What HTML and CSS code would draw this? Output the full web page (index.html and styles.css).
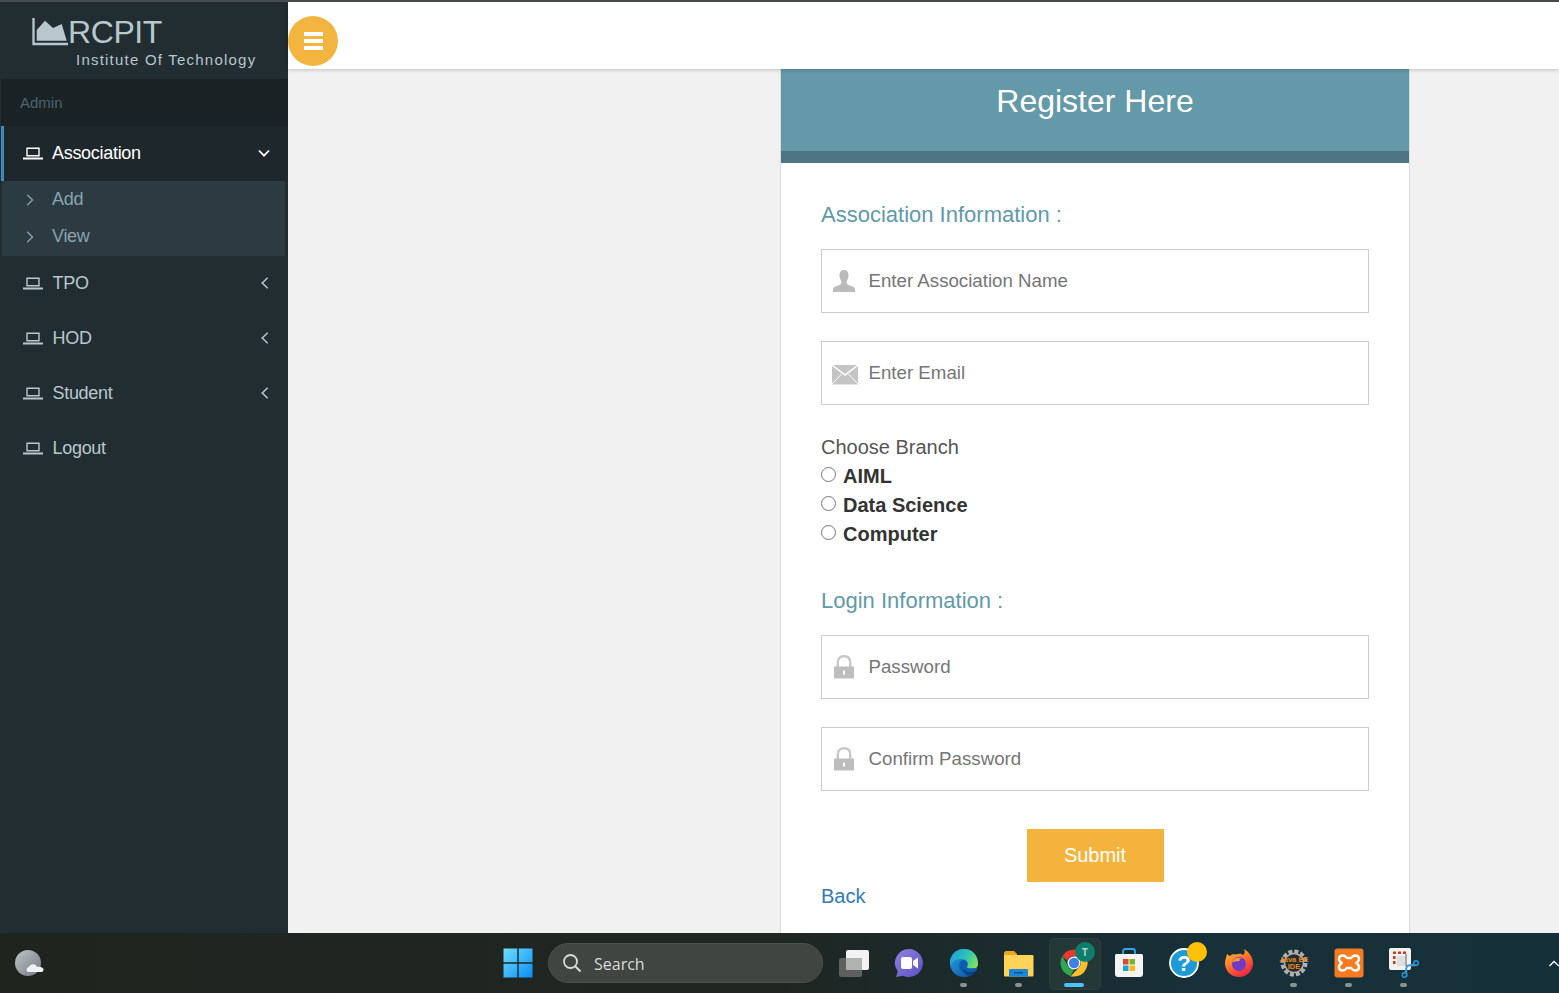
FILE: index.html
```html
<!DOCTYPE html>
<html lang="en">
<head>
<meta charset="utf-8">
<title>Register Here</title>
<link rel="stylesheet" href="styles.css">
</head>
<body>
<div class="topline"></div>
<div class="app">
  <aside class="sidebar">
    <div class="logo">
      <div class="logo-top">
        <svg class="logo-icon" width="36" height="28" viewBox="0 0 36 28"><path d="M1.500 0V26H36" fill="none" stroke="#b8c7ce" stroke-width="2.300"/><path d="M4.700 22.700V12L13 2.700L21 10L29.700 6L34.700 22.700Z" fill="#b8c7ce"/></svg>
        <span class="logo-name">RCPIT</span>
      </div>
      <div class="logo-sub">Institute Of Technology</div>
    </div>
    <div class="role">Admin</div>
    <nav>
      <a class="item active">
        <svg class="laptop" width="22" height="14" viewBox="0 0 22 14"><path d="M5 1.200H17V8.700H5Z" fill="none" stroke="currentColor" stroke-width="1.400"/><path d="M1 11.500H21" stroke="currentColor" stroke-width="2"/></svg>
        <span class="label">Association</span>
        <svg class="chev" width="12" height="12" viewBox="0 0 12 12"><path d="M1 3.500L6 8.700L11 3.500" fill="none" stroke="currentColor" stroke-width="1.800"/></svg>
      </a>
      <div class="sub">
        <a class="sub-item"><svg width="8" height="12" viewBox="0 0 8 12"><path d="M1.200 0.800L6.500 6L1.200 11.200" fill="none" stroke="currentColor" stroke-width="1.300"/></svg><span>Add</span></a>
        <a class="sub-item"><svg width="8" height="12" viewBox="0 0 8 12"><path d="M1.200 0.800L6.500 6L1.200 11.200" fill="none" stroke="currentColor" stroke-width="1.300"/></svg><span>View</span></a>
      </div>
      <a class="item">
        <svg class="laptop" width="22" height="14" viewBox="0 0 22 14"><path d="M5 1.200H17V8.700H5Z" fill="none" stroke="currentColor" stroke-width="1.400"/><path d="M1 11.500H21" stroke="currentColor" stroke-width="2"/></svg>
        <span class="label">TPO</span>
        <svg class="chev" width="12" height="12" viewBox="0 0 12 12"><path d="M8.700 0.800L3.200 6L8.700 11.200" fill="none" stroke="currentColor" stroke-width="1.500"/></svg>
      </a>
      <a class="item">
        <svg class="laptop" width="22" height="14" viewBox="0 0 22 14"><path d="M5 1.200H17V8.700H5Z" fill="none" stroke="currentColor" stroke-width="1.400"/><path d="M1 11.500H21" stroke="currentColor" stroke-width="2"/></svg>
        <span class="label">HOD</span>
        <svg class="chev" width="12" height="12" viewBox="0 0 12 12"><path d="M8.700 0.800L3.200 6L8.700 11.200" fill="none" stroke="currentColor" stroke-width="1.500"/></svg>
      </a>
      <a class="item">
        <svg class="laptop" width="22" height="14" viewBox="0 0 22 14"><path d="M5 1.200H17V8.700H5Z" fill="none" stroke="currentColor" stroke-width="1.400"/><path d="M1 11.500H21" stroke="currentColor" stroke-width="2"/></svg>
        <span class="label">Student</span>
        <svg class="chev" width="12" height="12" viewBox="0 0 12 12"><path d="M8.700 0.800L3.200 6L8.700 11.200" fill="none" stroke="currentColor" stroke-width="1.500"/></svg>
      </a>
      <a class="item">
        <svg class="laptop" width="22" height="14" viewBox="0 0 22 14"><path d="M5 1.200H17V8.700H5Z" fill="none" stroke="currentColor" stroke-width="1.400"/><path d="M1 11.500H21" stroke="currentColor" stroke-width="2"/></svg>
        <span class="label">Logout</span>
      </a>
    </nav>
  </aside>
  <div class="main">
    <header class="topbar">
      <button class="toggle" type="button" aria-label="Menu"><span></span><span></span><span></span></button>
    </header>
    <div class="content">
      <section class="card">
        <div class="card-head"><h1>Register Here</h1></div>
        <form class="card-body">
          <h2>Association Information :</h2>
          <label class="field">
            <svg width="24" height="24" viewBox="0 0 24 24"><path d="M12 1C8.500 1 7.500 3.500 7.500 6.500C7.500 9.500 9 11.500 9.500 13C9.500 15 8 16 5 17C2.500 17.800 1 18.500 1 20V23H23V20C23 18.500 21.500 17.800 19 17C16 16 14.500 15 14.500 13C15 11.500 16.500 9.500 16.500 6.500C16.500 3.500 15.500 1 12 1Z" fill="#bbb"/></svg>
            <input type="text" placeholder="Enter Association Name">
          </label>
          <label class="field">
            <svg class="mail" width="26" height="20" viewBox="0 0 26 20"><path d="M0 1L13 11L26 1V19.500H0Z" fill="#c4c4c4"/><path d="M1 0H25L13 9Z" fill="#c4c4c4"/><path d="M0 19L9.500 9M26 19L16.500 9" stroke="#fff" stroke-width="1" fill="none"/></svg>
            <input type="email" placeholder="Enter Email">
          </label>
          <div class="branch-title">Choose Branch</div>
          <label class="radio"><input type="radio" name="branch"><b>AIML</b></label>
          <label class="radio"><input type="radio" name="branch"><b>Data Science</b></label>
          <label class="radio"><input type="radio" name="branch"><b>Computer</b></label>
          <h2 class="login-title">Login Information :</h2>
          <label class="field">
            <svg width="24" height="24" viewBox="0 0 24 24"><path d="M5.800 12V7.500C5.800 3.500 8 1.300 12 1.300C16 1.300 18.200 3.500 18.200 7.500V12" fill="none" stroke="#c8c8c8" stroke-width="2.400"/><path d="M2 11.500H22V23.500H2Z" fill="#bdbdbd"/><path d="M11 15.500H13V19.500H11Z" fill="#fff"/></svg>
            <input type="password" placeholder="Password">
          </label>
          <label class="field">
            <svg width="24" height="24" viewBox="0 0 24 24"><path d="M5.800 12V7.500C5.800 3.500 8 1.300 12 1.300C16 1.300 18.200 3.500 18.200 7.500V12" fill="none" stroke="#c8c8c8" stroke-width="2.400"/><path d="M2 11.500H22V23.500H2Z" fill="#bdbdbd"/><path d="M11 15.500H13V19.500H11Z" fill="#fff"/></svg>
            <input type="password" placeholder="Confirm Password">
          </label>
          <div class="actions"><button class="submit" type="button">Submit</button></div>
          <a class="back">Back</a>
        </form>
      </section>
    </div>
  </div>
</div>
<footer class="taskbar">
  <svg class="weather" width="30" height="28" viewBox="0 0 30 28">
    <defs><linearGradient id="moon" x1="0" y1="0" x2="1" y2="1"><stop offset="0" stop-color="#c0c6ca"/><stop offset="1" stop-color="#6f7a82"/></linearGradient></defs>
    <circle cx="13" cy="14" r="13" fill="url(#moon)"/>
    <path d="M13 23C11 23 11 18 14 18C15 14.500 21 14 22 18C25 17 29 19 28.500 21C28 23 27 23 26 23Z" fill="#f0f1f2"/>
  </svg>
  <div class="tasks">
    <div class="tb">
      <svg width="30" height="30" viewBox="0 0 30 30"><defs><linearGradient id="win" x1="0" y1="0" x2="1" y2="1"><stop offset="0" stop-color="#6fe0ff"/><stop offset="1" stop-color="#0a8cf5"/></linearGradient></defs><path d="M0.500 0.500H14.300V14.300H0.500ZM15.700 0.500H29.500V14.300H15.700ZM0.500 15.700H14.300V29.500H0.500ZM15.700 15.700H29.500V29.500H15.700Z" fill="url(#win)"/></svg>
    </div>
    <div class="search">
      <svg width="20" height="20" viewBox="0 0 20 20"><circle cx="8.500" cy="8.500" r="6.500" fill="none" stroke="#d8dbd8" stroke-width="1.800"/><path d="M13.500 13.500L18.500 18.500" stroke="#d8dbd8" stroke-width="2"/></svg>
      <span>Search</span>
    </div>
    <div class="tb">
      <svg width="32" height="28" viewBox="0 0 32 28"><rect x="1" y="9" width="23" height="19" rx="2" fill="#5d605e"/><rect x="8" y="1" width="23" height="20" rx="2" fill="#f2f2f2"/><rect x="8" y="9" width="16" height="12" fill="#b0b2b0"/></svg>
    </div>
    <div class="tb">
      <svg width="30" height="30" viewBox="0 0 30 30"><defs><linearGradient id="meet" x1="0" y1="0" x2="1" y2="1"><stop offset="0" stop-color="#8f83e6"/><stop offset="1" stop-color="#5a50c0"/></linearGradient></defs><path d="M15 1A14 14 0 1 1 9 27.700L2 29C3 26 3.500 24.500 3.800 23.400A14 14 0 0 1 15 1Z" fill="url(#meet)"/><rect x="7" y="9" width="11" height="12" rx="2" fill="#fff"/><path d="M19 13L24 9.500V20.500L19 17Z" fill="#fff"/></svg>
    </div>
    <div class="tb dot">
      <svg width="30" height="30" viewBox="0 0 30 30"><defs><linearGradient id="edge1" x1="0" y1="0.300" x2="1" y2="0.700"><stop offset="0" stop-color="#1f9fe0"/><stop offset="0.550" stop-color="#2fc6b0"/><stop offset="1" stop-color="#86e05a"/></linearGradient><linearGradient id="edge2" x1="0" y1="0" x2="1" y2="1"><stop offset="0" stop-color="#2aa8e6"/><stop offset="1" stop-color="#0a4a96"/></linearGradient></defs><circle cx="15" cy="15" r="14" fill="url(#edge2)"/><path d="M1 15C1 7 7 1 15 1C23 1 29 7 29 16C29 19 27 20.500 24 20.500C20 20.500 18 20 17.500 19C20 17 19 13 15 11.500C10 10 4 12 1 17Z" fill="url(#edge1)"/><path d="M10.500 15.500C11 13 14 11.500 16 12.300C18.500 13.500 19.500 17 17.500 19C19 21 24 21 28.500 19.500C27 24 23 27.500 21 27.700C14 28 9 21 10.500 15.500Z" fill="#0b5fae"/><path d="M13 21C15 25 18 27.500 21 27.700C23 27.500 26 25.500 27.500 22.500C24 24.500 18 25 13 21Z" fill="#0a3f80"/></svg>
    </div>
    <div class="tb dot">
      <svg width="31" height="27" viewBox="0 0 31 27"><path d="M1 3C1 2 2 1 3 1H11L14 4H14V8H1Z" fill="#e8a91c"/><path d="M1 5H29C30 5 30.500 5.500 30.500 6.500V25C30.500 26 30 26.500 29 26.500H2C1.500 26.500 1 26 1 25Z" fill="#ffd357"/><path d="M6 20.500C6 19.500 6.500 19 7.500 19H23.500C24.500 19 25 19.500 25 20.500V26.500H6Z" fill="#1c87d8"/><path d="M11 22H20V23.500H11Z" fill="#0c4f94"/></svg>
    </div>
    <div class="tb active-app">
      <svg class="chrome" width="28" height="28" viewBox="0 0 28 28"><path d="M14 0.500A13.500 13.500 0 0 1 25.700 7.250H14A6.750 6.750 0 0 0 7.600 11.900L2.300 7.250A13.500 13.500 0 0 1 14 0.500Z" fill="#e33b2e"/><path d="M2.300 7.250L8.200 17.500A6.750 6.750 0 0 0 14 20.750L10.500 27A13.500 13.500 0 0 1 2.300 7.250Z" fill="#2da94f"/><path d="M25.700 7.250A13.500 13.500 0 0 1 14 27.500H10.500L19.800 17.500A6.750 6.750 0 0 0 19.800 10.500L14 7.250Z" fill="#fbc02d"/><circle cx="14" cy="14" r="6.500" fill="#fff"/><circle cx="14" cy="14" r="5.200" fill="#3f7fe8"/></svg>
      <span class="badge">T</span>
      <i class="bar"></i>
    </div>
    <div class="tb">
      <svg width="30" height="30" viewBox="0 0 30 30"><path d="M9 7V3.500C9 2 10 1 11 1H19C20 1 21 2 21 3.500V7" fill="none" stroke="#2fa7e8" stroke-width="1.800"/><path d="M1 8C1 6.500 1.500 6 3 6H27C28.500 6 29 6.500 29 8V26C29 28 28 29 26 29H4C2 29 1 28 1 26Z" fill="#f4f4f4"/><path d="M9 11H14.500V16.500H9Z" fill="#e5492c"/><path d="M15.500 11H21V16.500H15.500Z" fill="#75b52a"/><path d="M9 17.500H14.500V23H9Z" fill="#1ba1e2"/><path d="M15.500 17.500H21V23H15.500Z" fill="#fbbc09"/></svg>
    </div>
    <div class="tb help">
      <svg width="30" height="30" viewBox="0 0 30 30"><circle cx="15" cy="15" r="14" fill="#1e9ad8" stroke="#fff" stroke-width="1.800"/><text x="15" y="23" class="help-mark">?</text></svg>
      <span class="help-badge"></span>
    </div>
    <div class="tb">
      <svg width="30" height="30" viewBox="0 0 30 30"><defs><linearGradient id="fx" x1="0.200" y1="0" x2="0.800" y2="1"><stop offset="0" stop-color="#ffbd2e"/><stop offset="0.500" stop-color="#ff6a2b"/><stop offset="1" stop-color="#e5194f"/></linearGradient></defs><path d="M3 6C2 10 1 12 1 15C1 23 7 29 15 29C23 29 29 23 29 15C29 9 25 4 20 1C21 4 21 6 19 7C17 5 14 5.500 12 6.500C9.500 6 7 6.500 6 8C5 7.500 4 7 3 6Z" fill="url(#fx)"/><circle cx="15" cy="16" r="7" fill="#6f3bc8"/><path d="M8 14C10 10 14 9 18 10C15 11 15 12 16 13C12 13 10 14 8 14Z" fill="#ff9a2e"/></svg>
    </div>
    <div class="tb dot">
      <svg width="30" height="30" viewBox="0 0 30 30"><circle cx="15" cy="15" r="11.500" fill="none" stroke="#b0b0b0" stroke-width="4" stroke-dasharray="4 2.020"/><circle cx="15" cy="15" r="9.500" fill="#262b2c" stroke="#b0b0b0" stroke-width="1.500"/><text x="15" y="13.500" class="gear-text">Java EE</text><text x="15" y="20.500" class="gear-text">IDE</text></svg>
    </div>
    <div class="tb dot">
      <svg width="30" height="30" viewBox="0 0 30 30"><rect x="0.500" y="0.500" width="29" height="29" rx="3" fill="#f57b21"/><path d="M9 7.500C6.500 7.500 5 9 5 11C5 13 6.500 14 7.500 15C6.500 16 5 17 5 19C5 21 6.500 22.500 9 22.500C11 22.500 12 21 13 20H17C18 21 19 22.500 21 22.500C23.500 22.500 25 21 25 19C25 17 23.500 16 22.500 15C23.500 14 25 13 25 11C25 9 23.500 7.500 21 7.500C19 7.500 18 9 17 10H13C12 9 11 7.500 9 7.500Z" fill="none" stroke="#fff" stroke-width="2.500"/></svg>
    </div>
    <div class="tb dot">
      <svg width="32" height="32" viewBox="0 0 32 32"><rect x="1" y="1" width="22" height="22" rx="2" fill="#f1f1f1"/><path d="M5 4.500H8V7H5ZM10 4.500H13V7H10ZM15 4.500H18V7H15ZM5 9H7.500V12H5ZM5 14H7.500V17H5Z" fill="#d13a14"/><path d="M9 9H19V19H9Z" fill="#dfdfdf"/><path d="M18 7V18.500H29M18.500 18V30" stroke="#8a8a8a" stroke-width="1.300" fill="none"/><circle cx="28" cy="16" r="2.300" fill="none" stroke="#1f97dd" stroke-width="1.500"/><circle cx="16.500" cy="28" r="2.300" fill="none" stroke="#1f97dd" stroke-width="1.500"/><path d="M19 19L26 17M19 19L17 26" stroke="#1f97dd" stroke-width="1.500"/></svg>
    </div>
  </div>
  <svg class="tray" width="10" height="8" viewBox="0 0 10 8"><path d="M0.500 7L5 2.500L10 7" fill="none" stroke="#fff" stroke-width="1.300"/></svg>
</footer>
</body>
</html>
```
FILE: styles.css
```css
* { box-sizing: border-box; }
html, body { margin: 0; height: 993px; overflow: hidden; }
body { display: flex; flex-direction: column; font-family: "Liberation Sans", Arial, sans-serif; background: #f1f1f1; }
.topline { height: 2px; background: #4a4d50; flex: none; }
.app { display: flex; height: 931px; flex: none; }

.sidebar { width: 288px; flex: none; background: #222d32; color: #b8c7ce; }
.logo { height: 77px; padding: 14px 0 0 32px; }
.logo-top { display: flex; align-items: flex-start; height: 34px; }
.logo-icon { margin-top: 2px; flex: none; }
.logo-name { font-size: 32px; line-height: 33px; letter-spacing: -0.400px; }
.logo-sub { margin: 1px 0 0 44px; font-size: 15px; line-height: 18px; letter-spacing: 1.220px; }
.role { height: 47px; margin-left: 1px; padding-left: 19px; background: #1a2226; color: #4b646f; font-size: 15px; line-height: 47px; }
.item { display: flex; align-items: center; height: 55px; padding-left: 22px; font-size: 18px; letter-spacing: -0.300px; }
.item .label { margin-left: 8.500px; }
.item .chev { margin-left: auto; margin-right: 17px; margin-bottom: 2px; }
.item.active { margin-left: 1px; padding-left: 18px; border-left: 3px solid #3c8dbc; background: #1e282c; color: #fff; }
.item.active .label { margin-left: 8px; }
.item.active .chev { margin-right: 18px; }
.sub { height: 75px; margin: 0 3px 0 2px; background: #2c3b41; color: #8aa4af; }
.sub-item { display: flex; align-items: center; height: 37px; padding-left: 24px; font-size: 18px; letter-spacing: -0.300px; }
.sub-item span { margin-left: 18px; }

.main { flex: 1; min-width: 0; display: flex; flex-direction: column; }
.topbar { height: 67px; flex: none; background: #fff; box-shadow: 0 1px 4px rgba(0,0,0,.2); padding-top: 14px; position: relative; z-index: 1; }
.toggle { display: flex; flex-direction: column; align-items: center; justify-content: center; gap: 3px; width: 50px; height: 50px; padding: 0; border: 0; border-radius: 50%; background: #f4b440; }
.toggle span { display: block; width: 19px; height: 4px; background: #fff; }

.content { flex: 1; padding-left: 492px; overflow: hidden; }
.card { width: 630px; height: 864px; background: #fff; border-left: 1px solid #ddd; border-right: 1px solid #ddd; }
.card-head { height: 94px; background: #6399a9; border-bottom: 12px solid #4e7584; }
.card-head h1 { margin: 0; padding-top: 12px; color: #fff; font-size: 32px; font-weight: 400; line-height: 40px; text-align: center; }
.card-body { padding: 39px 40px 0; }
h2 { margin: 0 0 21px; color: #5f9aa9; font-size: 22px; font-weight: 400; line-height: 26px; }
.field { display: flex; align-items: center; height: 64px; margin-bottom: 28px; padding-left: 10px; border: 1px solid #ccc; background: #fff; }
.field svg { flex: none; }
.field input { flex: 1; min-width: 0; height: 100%; margin-left: 12.500px; padding: 0; border: 0; outline: 0; background: transparent; color: #333; font: 18.700px "Liberation Sans", Arial, sans-serif; }
.field .mail { margin-top: 4px; }
.field .mail + input { margin-left: 10.500px; }
.field input::placeholder { color: #757575; opacity: 1; }
.branch-title { margin-top: 28px; color: #555; font-size: 20px; line-height: 29px; }
.radio { display: flex; align-items: center; height: 29px; color: #333; font-size: 20px; }
.radio input { width: 15px; height: 15px; margin: 0 7px 5px 0; }
.login-title { margin-top: 39px; margin-bottom: 21px; }
.actions { display: flex; justify-content: center; margin-top: 38px; }
.submit { width: 137px; height: 53px; border: 0; background: #f3b33d; color: #fff; font: 20px "Liberation Sans", Arial, sans-serif; }
.back { display: block; margin-top: 1px; color: #337ab7; font-size: 20px; line-height: 26px; }

.taskbar { flex: none; height: 60px; display: flex; align-items: center; position: relative; background: linear-gradient(90deg, #20241f 0%, #1f2622 50%, #1a2c2e 65%, #17303a 78%, #16303a 100%); }
.weather { margin-left: 15px; flex: none; }
.tasks { display: flex; align-items: center; margin-left: 445px; }
.tb { position: relative; width: 55px; height: 60px; display: flex; align-items: center; justify-content: center; flex: none; }
.search { display: flex; align-items: center; width: 275px; height: 40px; margin: 0 3px; padding-left: 13px; border-radius: 20px; background: #414541; border: 1px solid #4c504c; color: #d9dbd8; font: 16px "Open Sans", "Noto Sans", sans-serif; }
.search span { margin-left: 12px; padding-top: 1px; }
.dot::after { content: ""; position: absolute; left: 24px; bottom: 6px; width: 7px; height: 4px; border-radius: 2px; background: #8b9190; }
.active-app::before { content: ""; position: absolute; left: 3px; top: 5px; width: 50px; height: 50px; border-radius: 5px; background: #253838; border: 1px solid #2c3f3f; }
.chrome { position: relative; }
.badge { position: absolute; left: 29px; top: 9px; width: 20px; height: 20px; border-radius: 50%; background: #0f7d6c; color: #a8d8cf; font: 700 10px/20px "Noto Sans", sans-serif; text-align: center; }
.bar { position: absolute; left: 18px; bottom: 6px; width: 20px; height: 4px; border-radius: 2px; background: #4cc2ff; }
.help-mark { fill: #fff; font: 700 22px "Liberation Sans", sans-serif; text-anchor: middle; }
.help-badge { position: absolute; left: 31px; top: 9px; width: 20px; height: 20px; border-radius: 50%; background: #ffc107; }
.gear-text { fill: #e8871e; font: 700 7.500px "Liberation Sans", sans-serif; text-anchor: middle; }
.tray { position: absolute; right: 0; top: 26px; }
```
